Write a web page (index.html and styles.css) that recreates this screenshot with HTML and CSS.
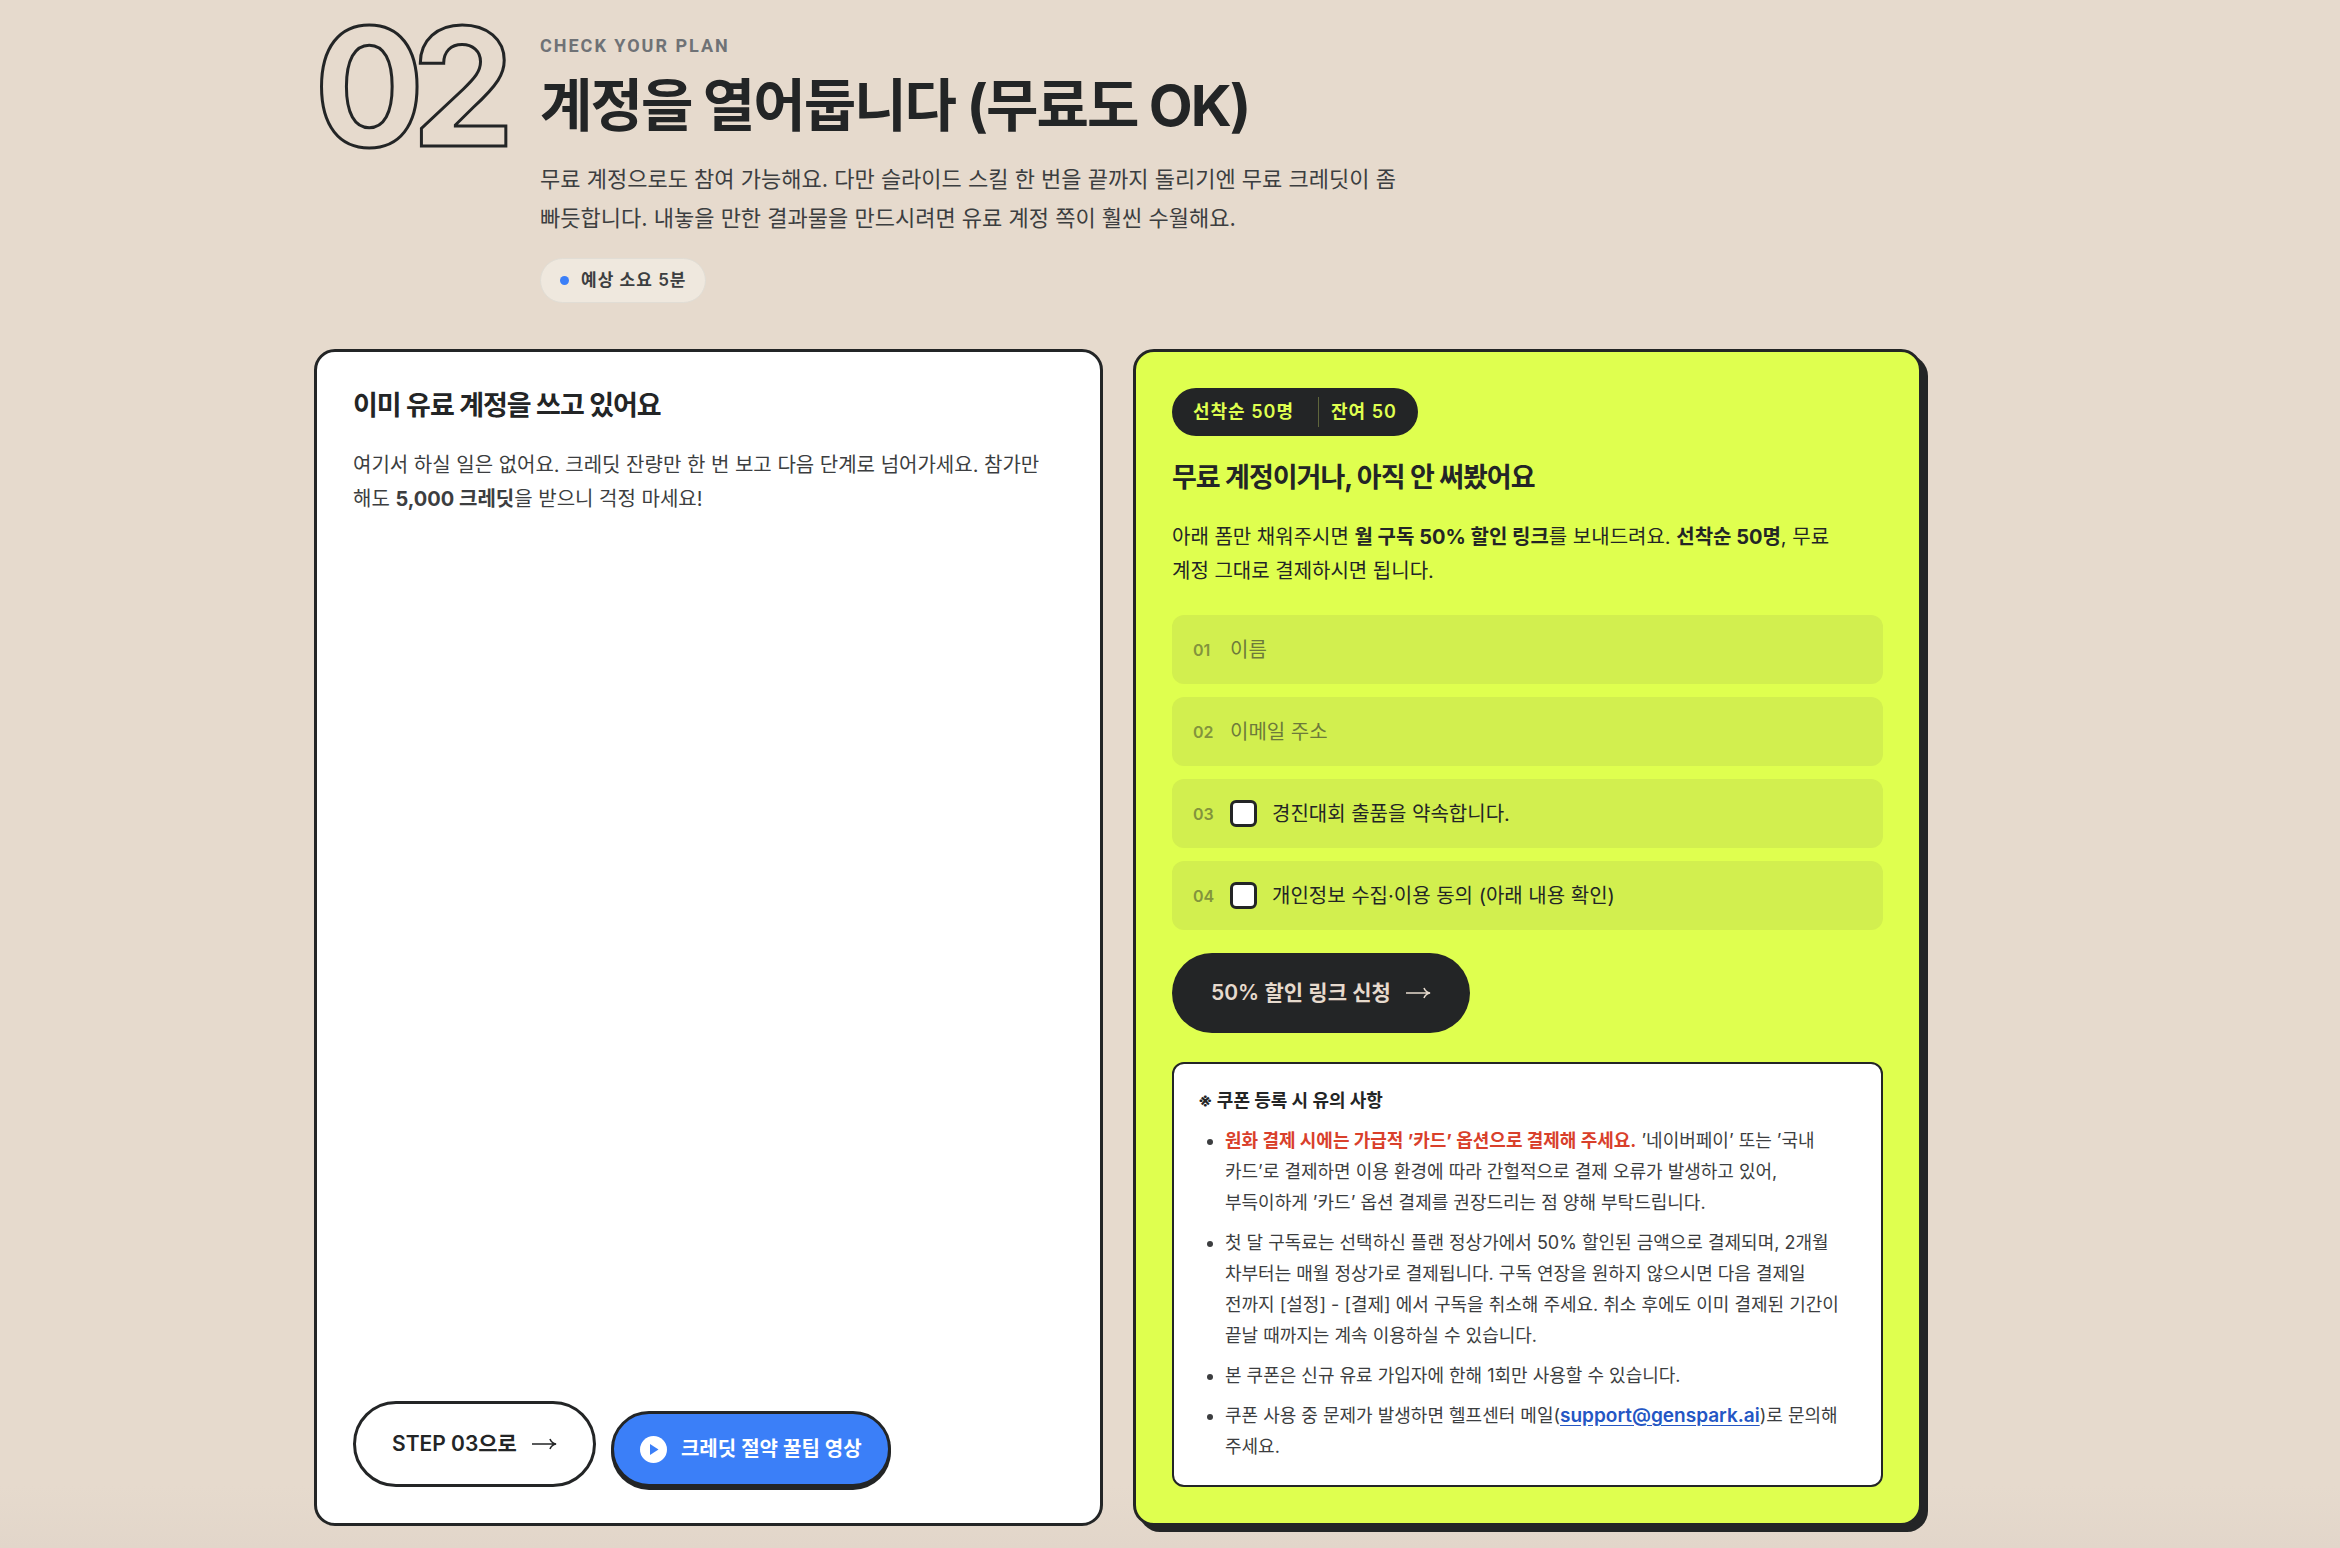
FILE: index.html
```html
<!DOCTYPE html>
<html lang="ko">
<head>
  <meta charset="UTF-8">
  <meta name="viewport" content="width=device-width, initial-scale=1.0">
  <title>STEP 02</title>
  <link rel="stylesheet" href="styles.css">
</head>
<body>

  <section class="step">
    <header class="step-head">
      <div class="step-num">02</div>
      <div class="step-intro">
        <p class="eyebrow">CHECK YOUR PLAN</p>
        <h2>계정을 열어둡니다 (무료도 OK)</h2>
        <p class="lead">무료 계정으로도 참여 가능해요. 다만 슬라이드 스킬 한 번을 끝까지 돌리기엔 무료 크레딧이 좀<br>빠듯합니다. 내놓을 만한 결과물을 만드시려면 유료 계정 쪽이 훨씬 수월해요.</p>
        <span class="time-chip"><i class="dot"></i>예상 소요 5분</span>
      </div>
    </header>

    <div class="cards">
      <article class="card">
        <h3>이미 유료 계정을 쓰고 있어요</h3>
        <p>여기서 하실 일은 없어요. 크레딧 잔량만 한 번 보고 다음 단계로 넘어가세요. 참가만<br>해도 <strong>5,000 크레딧</strong>을 받으니 걱정 마세요!</p>
        <div class="card-actions">
          <a href="#step-03" class="btn btn-outline">STEP 03으로
            <svg class="arrow" width="25" height="12" viewBox="0 0 25 12"><path d="M0 6H23M18 1Q19.5 5 24 6Q19.5 7 18 11"/></svg>
          </a>
          <a href="#tips" class="btn btn-video">
            <svg class="play" width="27" height="27" viewBox="0 0 27 27"><circle cx="13.5" cy="13.5" r="13.5"/><path d="M10 8L18.5 13.5L10 19Z"/></svg>
            크레딧 절약 꿀팁 영상
          </a>
        </div>
      </article>

      <article class="card card-lime">
        <div class="badge"><span>선착순 50명</span><span class="badge-left">잔여 50</span></div>
        <h3>무료 계정이거나, 아직 안 써봤어요</h3>
        <p>아래 폼만 채워주시면 <strong>월 구독 50% 할인 링크</strong>를 보내드려요. <strong>선착순 50명</strong>, 무료<br>계정 그대로 결제하시면 됩니다.</p>

        <form class="apply">
          <label class="field">
            <span class="field-num">01</span>
            <input type="text" class="field-input" placeholder="이름" aria-label="이름">
          </label>
          <label class="field">
            <span class="field-num">02</span>
            <input type="email" class="field-input" placeholder="이메일 주소" aria-label="이메일 주소">
          </label>
          <label class="field">
            <span class="field-num">03</span>
            <input type="checkbox" class="field-check">
            <span class="field-text">경진대회 출품을 약속합니다.</span>
          </label>
          <label class="field">
            <span class="field-num">04</span>
            <input type="checkbox" class="field-check">
            <span class="field-text">개인정보 수집·이용 동의 (아래 내용 확인)</span>
          </label>
          <button type="submit" class="btn btn-dark">50% 할인 링크 신청
            <svg class="arrow" width="25" height="12" viewBox="0 0 25 12"><path d="M0 6H23M18 1Q19.5 5 24 6Q19.5 7 18 11"/></svg>
          </button>
        </form>

        <div class="notice">
          <h4>※ 쿠폰 등록 시 유의 사항</h4>
          <ul>
            <li><strong class="warn">원화 결제 시에는 가급적 ’카드’ 옵션으로 결제해 주세요.</strong> ’네이버페이’ 또는 ’국내<br>카드’로 결제하면 이용 환경에 따라 간헐적으로 결제 오류가 발생하고 있어,<br>부득이하게 ’카드’ 옵션 결제를 권장드리는 점 양해 부탁드립니다.</li>
            <li>첫 달 구독료는 선택하신 플랜 정상가에서 50% 할인된 금액으로 결제되며, 2개월<br>차부터는 매월 정상가로 결제됩니다. 구독 연장을 원하지 않으시면 다음 결제일<br>전까지 [설정] - [결제] 에서 구독을 취소해 주세요. 취소 후에도 이미 결제된 기간이<br>끝날 때까지는 계속 이용하실 수 있습니다.</li>
            <li>본 쿠폰은 신규 유료 가입자에 한해 1회만 사용할 수 있습니다.</li>
            <li>쿠폰 사용 중 문제가 발생하면 헬프센터 메일(<a href="mailto:support@genspark.ai">support@genspark.ai</a>)로 문의해<br>주세요.</li>
          </ul>
        </div>
      </article>
    </div>
  </section>

</body>
</html>
```
FILE: styles.css
```css
* {
  box-sizing: border-box;
}

body {
  margin: 0;
  background: linear-gradient(#e6dacd 0 96%, #e2d6ca 100%);
  color: #232526;
  font-family: Inter, "Noto Sans CJK KR", sans-serif;
  font-size: 20px;
  line-height: 34px;
  word-break: keep-all;
}

h2, h3, h4, p, ul {
  margin: 0;
}

.step {
  padding: 0 418px 22px 314px;
}

/* header */
.step-head {
  display: flex;
  margin-bottom: 46px;
}

.step-num {
  flex: 0 0 226px;
  font-size: 164px;
  font-weight: 700;
  line-height: 174px;
  letter-spacing: -13px;
  color: transparent;
  -webkit-text-stroke: 3px #232526;
}

.step-intro {
  padding-top: 34px;
}

.eyebrow {
  font-family: Roboto, sans-serif;
  font-size: 18px;
  font-weight: 700;
  line-height: 24px;
  letter-spacing: 2px;
  color: #6f7276;
}

h2 {
  margin: 12px 0 18px;
  font-size: 57px;
  line-height: 72px;
  letter-spacing: -2px;
}

.lead {
  font-size: 22px;
  line-height: 39px;
  color: #3c3e40;
}

.time-chip {
  display: inline-flex;
  align-items: center;
  gap: 12px;
  margin-top: 20px;
  padding: 0 19px;
  border: 1px solid #e1ddd5;
  border-radius: 24px;
  background: #efe8de;
  font-size: 17px;
  font-weight: 600;
  line-height: 43px;
  letter-spacing: 1px;
  color: #3c3e40;
}

.dot {
  width: 9px;
  height: 9px;
  border-radius: 50%;
  background: #3b7ff8;
}

/* cards */
.cards {
  display: grid;
  grid-template-columns: 1fr 1fr;
  gap: 30px;
}

.card {
  display: flex;
  flex-direction: column;
  padding: 36px;
  border: 3px solid #232526;
  border-radius: 21px;
  background: #fff;
}

.card-lime {
  background: #dfff4f;
  box-shadow: 6px 6px 0 #232526;
}

h3 {
  margin-bottom: 24px;
  font-size: 27px;
  line-height: 36px;
  letter-spacing: -1px;
}

.card p {
  color: #3c3e40;
}

.card-lime p {
  color: #232526;
}

.card-actions {
  display: flex;
  align-items: flex-end;
  gap: 15px;
  margin-top: auto;
}

.btn {
  display: inline-flex;
  align-items: center;
  gap: 15px;
  border: 0;
  border-radius: 43px;
  font-family: inherit;
  font-size: 21px;
  font-weight: 600;
  line-height: 30px;
  text-decoration: none;
}

.btn-outline {
  padding: 25px 36px;
  border: 3px solid #232526;
  color: #232526;
}

.btn-video {
  gap: 14px;
  padding: 20px 26px;
  border: 3px solid #232526;
  background: #3b7ff8;
  box-shadow: 0 3px 0 #232526;
  font-size: 20px;
  color: #fff;
}

.btn-dark {
  align-self: flex-start;
  margin-top: 10px;
  padding: 25px 39px;
  background: #232526;
  color: #e6dacd;
}

.arrow {
  fill: none;
  stroke: currentColor;
  stroke-width: 1.6;
}

.play {
  fill: #fff;
}

.play path {
  fill: #3b7ff8;
}

.badge {
  display: flex;
  align-items: center;
  align-self: flex-start;
  gap: 24px;
  height: 48px;
  margin-bottom: 24px;
  padding: 0 21px;
  border-radius: 24px;
  background: #232526;
  font-size: 18px;
  font-weight: 600;
  line-height: 30px;
  letter-spacing: 1px;
  color: #dfff4f;
}

.badge-left {
  padding-left: 12px;
  border-left: 1px solid #5f663c;
}

/* form */
.apply {
  display: flex;
  flex-direction: column;
  gap: 13px;
  margin: 27px 0 29px;
}

.field {
  display: flex;
  align-items: center;
  gap: 15px;
  height: 69px;
  padding: 0 21px;
  border-radius: 12px;
  background: #d2ef4f;
}

.field-num {
  width: 22px;
  font-size: 16px;
  font-weight: 600;
  color: #83943c;
}

.field-input {
  flex: 1;
  padding: 0;
  border: 0;
  outline: 0;
  background: none;
  font: inherit;
  color: #232526;
}

.field-input::placeholder {
  color: #6d7a3a;
}

.field-check {
  appearance: none;
  width: 27px;
  height: 27px;
  margin: 0;
  border: 3px solid #232526;
  border-radius: 6px;
  background: #fff;
}

/* coupon notice */
.notice {
  padding: 21px 24px 23px;
  border: 2px solid #232526;
  border-radius: 12px;
  background: #fff;
  font-size: 18px;
  line-height: 31px;
  color: #3c3e40;
}

h4 {
  margin-bottom: 9px;
  font-size: 18px;
  color: #232526;
}

.notice ul {
  padding-left: 27px;
}

.notice li + li {
  margin-top: 9px;
}

.warn {
  color: #d9402b;
}

.notice a {
  font-size: 19px;
  font-weight: 600;
  color: #2456c4;
  text-underline-offset: 3px;
}
```
